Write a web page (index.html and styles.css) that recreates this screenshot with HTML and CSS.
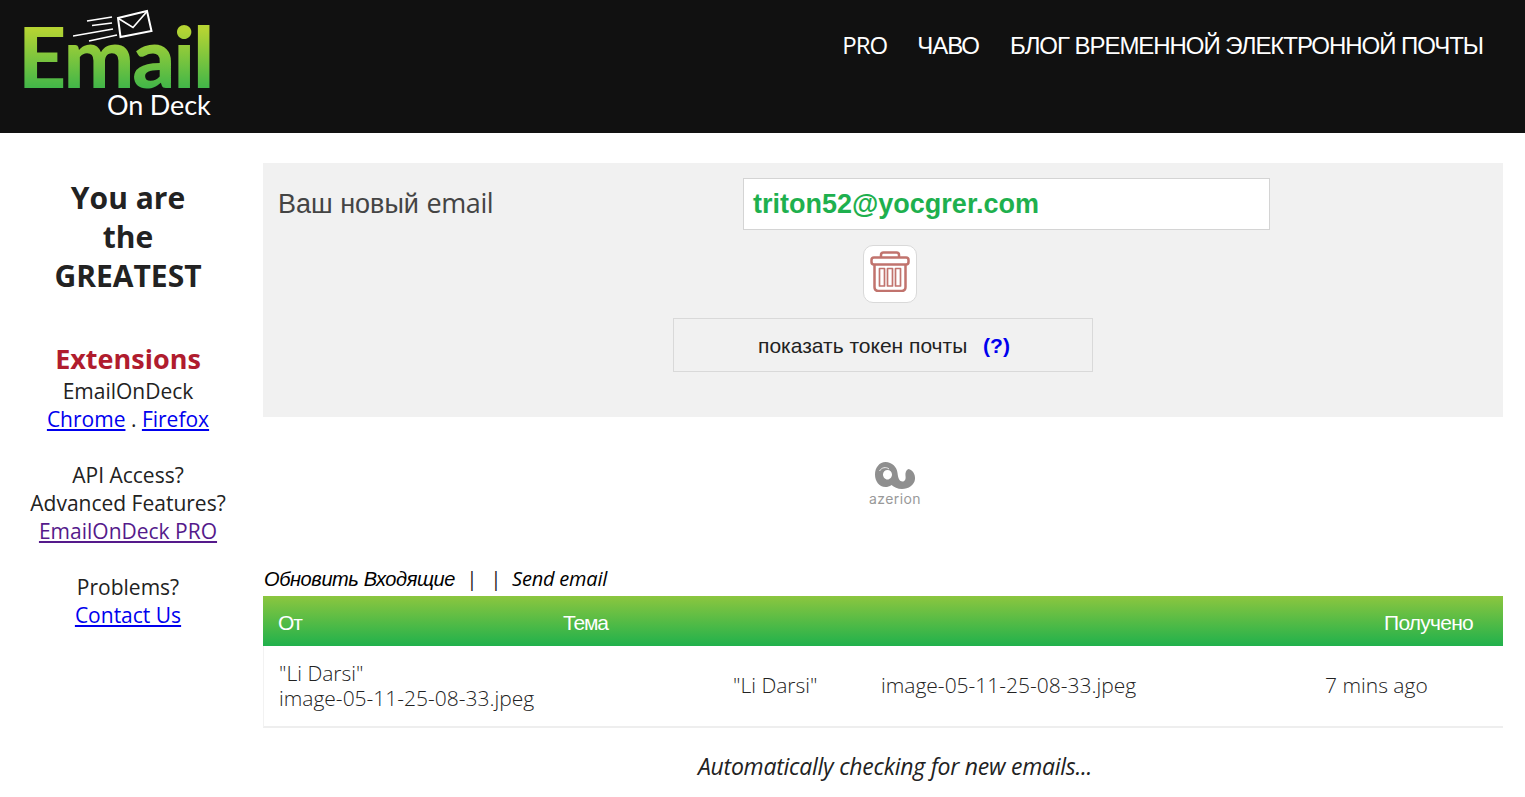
FILE: index.html
```html
<!DOCTYPE html>
<html lang="ru">
<head>
<meta charset="utf-8">
<title>EmailOnDeck</title>
<link rel="stylesheet" href="styles.css">
</head>
<body>
<header class="topbar">
  <a class="logo" href="#">
    <span class="logo-email">Email</span>
    <span class="logo-deck">On Deck</span>
    <svg class="logo-mail" width="84" height="34" viewBox="0 0 84 34" fill="none" stroke="#fff" stroke-width="1.700">
      <path d="M45 9 74 2 78.500 22 47.500 28Z" stroke-width="2"/>
      <path d="M45.500 9.500 60 18.500 74 2.500"/>
      <path d="M14 12 39 8M19 16.500 39 14M0 27 40 20M16 32 44 26"/>
    </svg>
  </a>
  <nav class="nav">
    <a class="nav-pro" href="#">PRO</a>
    <a class="nav-faq" href="#">ЧАВО</a>
    <a href="#">БЛОГ ВРЕМЕННОЙ ЭЛЕКТРОННОЙ ПОЧТЫ</a>
  </nav>
</header>
<div class="page">
  <aside class="side">
    <h2 class="greatest">You are<br>the<br>GREATEST</h2>
    <h3 class="ext">Extensions</h3>
    <p>EmailOnDeck<br><a href="#">Chrome</a> . <a href="#">Firefox</a></p>
    <p>API Access?<br>Advanced Features?<br><a class="visited" href="#">EmailOnDeck PRO</a></p>
    <p>Problems?<br><a href="#">Contact Us</a></p>
  </aside>
  <main class="main">
    <section class="panel">
      <div class="email-row">
        <span class="email-label">Ваш новый <span class="latin">email</span></span>
        <div class="email-box">triton52@yocgrer.com</div>
      </div>
      <button class="trash" type="button" aria-label="delete">
        <svg class="trash-icon" width="40" height="41" viewBox="0 0 40 41" fill="none" stroke="#c1736d" stroke-width="2.500" stroke-linejoin="round">
          <path d="M11 6.500V4Q11 1.500 13.500 1.500H26.500Q29 1.500 29 4V6.500"/>
          <rect x="1.500" y="6.500" width="37" height="7" rx="2.500"/>
          <path d="M4.500 13.500V36Q4.500 40 8.500 40H31.500Q35.500 40 35.500 36V13.500"/>
          <rect x="9.500" y="17.500" width="5" height="17.500" stroke-width="1.700"/>
          <rect x="17.500" y="17.500" width="5" height="17.500" stroke-width="1.700"/>
          <rect x="25.500" y="17.500" width="5" height="17.500" stroke-width="1.700"/>
        </svg>
      </button>
      <div class="token">показать токен почты <a href="#">(?)</a></div>
    </section>
    <div class="ad">
      <svg width="44" height="28" viewBox="0 0 44 28">
        <path fill="#8f8f8f" fill-rule="evenodd" d="M12.500 1C19 1 24 6 24.500 12C25 17 26.500 20.500 29.500 20.500C32 20.500 33 18 32.500 15C32 12 33 9 35.500 8C39.500 9 42.500 13 42 18C41.500 24 35.500 28 29 28C24.500 28 21 26 18.500 24C16.500 25.500 14.500 26 12.500 26C6 26 2 20 2 13.500C2 6.500 6.500 1 12.500 1ZM14.500 9C12 9 10 11 10 13.500C10 16 12 18.500 14.500 18.500C17 18.500 19 16 19 13.500C19 11 17 9 14.500 9Z"/>
        <path fill="none" stroke="#f0f0f0" stroke-width="1" d="M6.500 10C8.500 6.500 13 5.500 16 8"/>
      </svg>
      <span class="ad-name">azerion</span>
    </div>
    <div class="actions">
      <a class="act-refresh" href="#">Обновить Входящие</a><span class="sep">|</span><span class="sep sep-second">|</span><a class="act-send" href="#">Send email</a>
    </div>
    <div class="table-head">
      <span class="col-from">От</span>
      <span class="col-subject">Тема</span>
      <span class="col-date">Получено</span>
    </div>
    <div class="table-row">
      <div class="cell-main">"Li Darsi"<br>image-05-11-25-08-33.jpeg</div>
      <div class="cell-name">"Li Darsi"</div>
      <div class="cell-subject">image-05-11-25-08-33.jpeg</div>
      <div class="cell-date">7 mins ago</div>
    </div>
    <p class="checking">Automatically checking for new emails...</p>
  </main>
</div>
</body>
</html>
```
FILE: styles.css
```css
* { box-sizing: border-box; }
html, body { margin: 0; padding: 0; }
body { background: #fff; color: #222; font-family: "Open Sans", sans-serif; font-size: 21px; overflow: hidden; height: 797px; }
a { color: #0000ee; }

.topbar { height: 133px; background: #111; display: flex; justify-content: space-between; position: relative; }
.logo { display: block; position: relative; width: 240px; text-decoration: none; }
.logo-mail { position: absolute; left: 73px; top: 9px; }
.logo-email { position: absolute; left: 16px; top: 23px; padding: 0 4px 3px 2px; font: 900 84px/66px Lato, sans-serif; letter-spacing: -2px; background: linear-gradient(#b5d433 9%, #3fb549 96%); -webkit-background-clip: text; background-clip: text; color: transparent; }
.logo-deck { position: absolute; left: 107px; top: 92px; font: 400 27px/26px Lato, sans-serif; letter-spacing: -.150px; color: #fff; }
.nav { display: flex; gap: 30px; padding: 30px 42px 0 0; font: 24px/32px "Liberation Sans", sans-serif; letter-spacing: -1.050px; }
.nav a { color: #fff; text-decoration: none; }
.nav .nav-pro { font-family: "Open Sans", sans-serif; letter-spacing: -1px; margin-top: -1px; }
.nav .nav-faq { margin-right: 1px; }

.page { display: flex; padding-top: 30px; }
.side { width: 256px; flex: none; text-align: center; font-size: 21px; line-height: 28px; }
.side p { margin: 0 0 28px; }
.side .visited { color: #551a8b; }
.greatest { margin: 0; padding-top: 15px; font-size: 30px; line-height: 39px; font-weight: 700; color: #222; }
.ext { margin: 46px 0 0; font-size: 27px; line-height: 36px; font-weight: 700; color: #b01c2e; }

.main { width: 1240px; margin-left: 7px; flex: none; }
.panel { height: 254px; background: #f1f1f1; padding-top: 15px; display: flex; flex-direction: column; align-items: center; }
.email-row { width: 100%; display: flex; align-items: center; height: 52px; }
.email-label { width: 480px; padding: 0 0 2px 15px; font: 27px/30px "Liberation Sans", sans-serif; color: #444; }
.latin { font-family: "Open Sans", sans-serif; letter-spacing: -.4px; }
.email-box { width: 527px; height: 52px; background: #fff; border: 1px solid #d4d4d4; padding: 0 9px; font: 700 27px/50px "Liberation Sans", sans-serif; color: #1eb04e; }
.trash { margin: 15px 0 15px 14px; width: 54px; height: 58px; padding: 0; background: #fff; border: 1px solid #d9d9d9; border-radius: 10px; display: flex; align-items: center; justify-content: center; }
.trash-icon { margin-bottom: 5px; }
.token { width: 420px; height: 54px; padding-left: 2px; border: 1px solid #d9d9d9; text-align: center; font: 21px/54px "Liberation Sans", sans-serif; color: #222; }
.token a { margin-left: 10px; color: #0000ee; font-weight: 700; text-decoration: none; }

.ad { height: 144px; display: flex; flex-direction: column; align-items: center; padding: 44px 0 0 24px; }
.ad-name { font: 400 14px/14px Inter, sans-serif; color: #999; letter-spacing: .4px; margin-top: 3px; }

.actions { height: 35px; padding-left: 1px; font: italic 20px/35px "Open Sans", sans-serif; color: #222; white-space: nowrap; }
.actions a { color: #000; text-decoration: none; }
.act-refresh { font-family: "Liberation Sans", sans-serif; letter-spacing: -.4px; }
.act-send { letter-spacing: -.200px; }
.sep { margin-left: 11px; color: #222; }
.sep-second { margin-left: 13px; margin-right: 11px; }

.table-head { height: 50px; padding-top: 3px; background: linear-gradient(#8cc63f, #20b14c); display: flex; align-items: center; color: #fff; font: 21px "Liberation Sans", sans-serif; letter-spacing: -1.200px; }
.col-from { width: 300px; padding-left: 15px; }
.col-subject { flex: 1; }
.col-date { padding-right: 30px; letter-spacing: -.750px; }

.table-row { height: 82px; display: flex; align-items: center; border-bottom: 2px solid #eee; border-left: 1px solid #f2f2f2; line-height: 25px; font-size: 21px; font-weight: 300; color: #222; }
.cell-main { width: 469px; padding-left: 15px; }
.cell-name { width: 148px; padding-bottom: 2px; }
.cell-subject { width: 444px; padding-bottom: 2px; }
.cell-date { flex: 1; padding-bottom: 2px; }

.checking { margin: 23px 0 0; padding-left: 24px; text-align: center; font-style: italic; font-size: 23px; line-height: 30px; color: #222; letter-spacing: -.250px; }
```
